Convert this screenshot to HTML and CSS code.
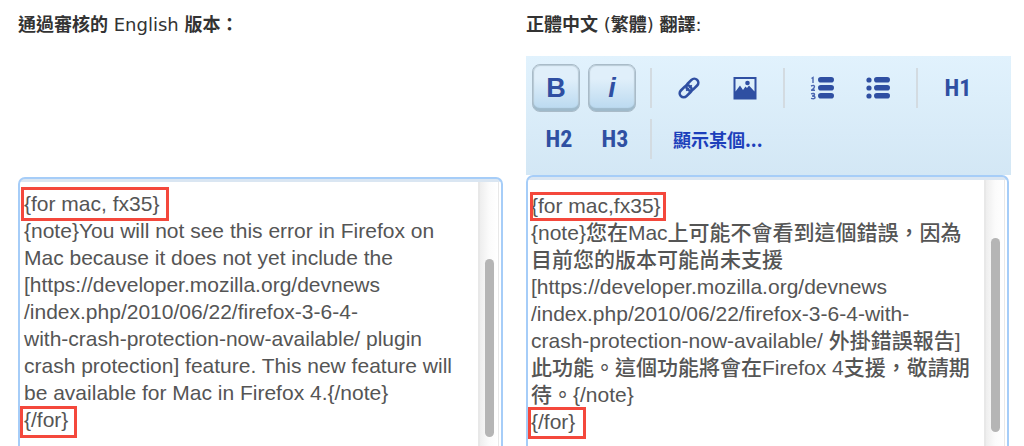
FILE: index.html
```html
<!DOCTYPE html>
<html lang="zh-Hant">
<head>
<meta charset="utf-8">
<title>翻譯</title>
<link rel="stylesheet" href="styles.css">
</head>
<body>
<main class="compare">
  <section class="pane pane-source">
    <label class="pane-title" for="source"><b>通過審核的</b> English <b>版本：</b></label>
    <div class="editor">
      <textarea class="text" id="source" readonly wrap="off">{for mac, fx35}
{note}You will not see this error in Firefox on
Mac because it does not yet include the
[https://developer.mozilla.org/devnews
/index.php/2010/06/22/firefox-3-6-4-
with-crash-protection-now-available/ plugin
crash protection] feature. This new feature will
be available for Mac in Firefox 4.{/note}
{/for}</textarea>
      <div class="track"><div class="thumb"></div></div>
      <span class="mark mark-open"></span>
      <span class="mark mark-close"></span>
    </div>
  </section>
  <section class="pane pane-target">
    <label class="pane-title" for="target"><b>正體中文</b> (<b>繁體</b>) <b>翻譯</b>:</label>
    <div class="toolbar">
      <button class="tool raised" type="button">B</button>
      <button class="tool raised italic" type="button">i</button>
      <span class="sep"></span>
      <button class="tool" type="button" aria-label="Link">
        <svg width="24" height="24" viewBox="0 0 24 24" fill="none" stroke="#2f4fa2" stroke-width="2.6"><g transform="rotate(-45 12 12)"><rect x="0.500" y="8" width="13.500" height="8" rx="4"/><rect x="10" y="8" width="13.500" height="8" rx="4"/><path d="M8 12h8" stroke-width="1.200"/></g></svg>
      </button>
      <button class="tool" type="button" aria-label="Image">
        <svg width="24" height="24" viewBox="0 0 24 24"><path fill="#2f4fa2" fill-rule="evenodd" d="M0.500 1h23v22.500h-23zM2.500 3v12.500l4.500-6 3 4.500 2.500-3.500 1.500 1.500 2-2.500 5.500 6v-12.500z"/><circle cx="14.500" cy="7" r="2.300" fill="#2f4fa2"/></svg>
      </button>
      <span class="sep"></span>
      <button class="tool" type="button" aria-label="Numbered list">
        <svg width="24" height="24" viewBox="0 0 24 24"><g fill="#2f4fa2"><rect x="8" y="1" width="16" height="5.600" rx="2.800"/><rect x="8" y="9" width="16" height="5.600" rx="2.800"/><rect x="8" y="17" width="16" height="5.600" rx="2.800"/></g><g fill="none" stroke="#4a66b0" stroke-width="1.400"><path d="M1.500 2.500L3 1.500V7"/><path d="M1 10q3.500-1.500 3.500.8Q4.500 12.500 1.200 14.300H5"/><path d="M1 17.800q3.500-1 3.500.8 0 1.400-2.500 1.400 3 0 3 1.500 0 1.800-4 .9"/></g></svg>
      </button>
      <button class="tool" type="button" aria-label="Bulleted list">
        <svg width="24" height="24" viewBox="0 0 24 24"><g fill="#2f4fa2"><circle cx="3" cy="4" r="2.600"/><circle cx="3" cy="12" r="2.600"/><circle cx="3" cy="20" r="2.600"/><rect x="8" y="1" width="16" height="5.600" rx="2.800"/><rect x="8" y="9" width="16" height="5.600" rx="2.800"/><rect x="8" y="17" width="16" height="5.600" rx="2.800"/></g></svg>
      </button>
      <span class="sep"></span>
      <button class="tool heading" type="button">H1</button>
      <button class="tool heading" type="button">H2</button>
      <button class="tool heading" type="button">H3</button>
      <span class="sep"></span>
      <button class="show" type="button">顯示某個...</button>
    </div>
    <div class="editor">
      <textarea class="text" id="target" wrap="off">{for mac,fx35}
{note}您在Mac上可能不會看到這個錯誤，因為
目前您的版本可能尚未支援
[https://developer.mozilla.org/devnews
/index.php/2010/06/22/firefox-3-6-4-with-
crash-protection-now-available/ 外掛錯誤報告]
此功能。這個功能將會在Firefox 4支援，敬請期
待。{/note}
{/for}</textarea>
      <div class="track"><div class="thumb"></div></div>
      <span class="mark mark-open"></span>
      <span class="mark mark-close"></span>
    </div>
  </section>
</main>
</body>
</html>
```
FILE: styles.css
```css
* { box-sizing: border-box; }
body { margin: 0; background: #fff; }

.compare {
  display: grid;
  grid-template-columns: 1fr 1fr;
  gap: 23px;
  min-height: 100vh;
  padding: 12px 13px 0 18px;
}
.pane { display: flex; flex-direction: column; min-width: 0; }
.pane-title {
  margin-bottom: 18px;
  font: 18px/26px Verdana, "DejaVu Sans", "Noto Sans CJK TC", sans-serif;
  color: #333;
}
.pane-title b { font-family: "Noto Sans CJK TC", sans-serif; line-height: 20px; }
.pane-source .pane-title { margin-bottom: 139px; }

/* Toolbar */
.toolbar {
  display: flex;
  flex-wrap: wrap;
  align-items: center;
  gap: 3px 8px;
  padding: 8px 6px 12px;
  background: linear-gradient(#e1f2fd, #d3e7f5);
}
.tool {
  display: flex;
  align-items: center;
  justify-content: center;
  width: 48px;
  height: 48px;
  padding: 0;
  border: 0;
  border-radius: 8px;
  background: none;
  color: #2f4fa2;
  font: bold 27px/32px "Liberation Sans", Arial, sans-serif;
}
.raised {
  border: 1px solid #a9bbc8;
  background: linear-gradient(#e0effa 30%, #b8d8ef);
  box-shadow: inset 0 -3px 1px #9fbacb, inset 0 0 1px 1px #b9cad5;
}
.italic { font-style: italic; }
.heading {
  padding-left: 6px;
  font: bold 24px/28px Impact, "Liberation Sans Narrow", "Roboto Condensed", "Liberation Sans", sans-serif;
}
.sep { width: 2px; height: 40px; margin: 0 5px 0 6px; background: #d3dbe1; }
.show {
  padding: 0 8px;
  border: 0;
  background: none;
  color: #1c3fbb;
  font: bold 18px/28px "Noto Sans CJK TC", sans-serif;
}

/* Editors */
.editor {
  position: relative;
  display: flex;
  flex: 1;
  padding: 3px 2px 0 0;
  border: 2px solid #a6cdf8;
  border-bottom: 0;
  border-radius: 7px 7px 0 0;
  background: linear-gradient(#dae6f2 3px, #fff 3px);
}
.pane-target .editor { margin-right: 2px; }
.text {
  flex: 1;
  min-width: 0;
  min-height: 264px;
  margin: 0;
  padding: 8px 0 0 4px;
  border: 0;
  outline: 0;
  resize: none;
  overflow: hidden;
  background: none;
  color: #555;
  font: 500 21px/27px "Liberation Sans", Arial, "Noto Sans CJK TC", sans-serif;
}
.pane-target .text { padding: 12px 0 0 3px; }
.track {
  display: flex;
  width: 21px;
  padding: 77px 4px 9px 5px;
  border: solid #e8e8e8;
  border-width: 0 1px 0 2px;
  background: linear-gradient(90deg, #eee, #fbfbfb 50%, #fff);
}
.pane-target .track { padding: 58px 4px 14px 5px; }
.thumb { flex: 1; border-radius: 6px; background: #b5b5b5; }

/* Highlight frames laid over the text */
.mark { position: absolute; border: 3px solid #f4483c; pointer-events: none; }
.mark-open { left: 1px; top: 8px; width: 148px; height: 34px; }
.mark-close { left: 0; top: 227px; width: 57px; height: 32px; }
.pane-target .mark-open { left: 2px; top: 15px; width: 136px; height: 29px; }
.pane-target .mark-close { left: 0; top: 230px; width: 58px; height: 32px; }
```
